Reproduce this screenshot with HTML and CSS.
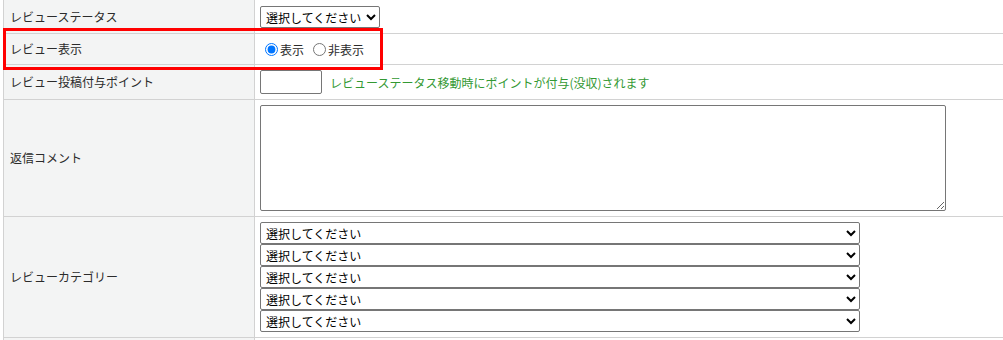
FILE: index.html
```html
<!DOCTYPE html>
<html lang="ja">
<head>
    <meta charset="UTF-8">
    <title>レビュー編集</title>
    <link rel="stylesheet" href="styles.css">
</head>
<body>
    <div class="review-form">
        <div class="row row-status">
            <div class="label">レビューステータス</div>
            <div class="field">
                <select class="status-select">
                    <option>選択してください</option>
                </select>
            </div>
        </div>
        <div class="row row-display">
            <div class="label">レビュー表示</div>
            <div class="field">
                <label class="radio"><input type="radio" name="disp" checked>表示</label>
                <label class="radio"><input type="radio" name="disp">非表示</label>
            </div>
        </div>
        <div class="row row-point">
            <div class="label">レビュー投稿付与ポイント</div>
            <div class="field">
                <input type="text" class="point-input">
                <span class="note">レビューステータス移動時にポイントが付与(没収)されます</span>
            </div>
        </div>
        <div class="row row-comment">
            <div class="label">返信コメント</div>
            <div class="field">
                <textarea class="comment"></textarea>
            </div>
        </div>
        <div class="row row-category">
            <div class="label">レビューカテゴリー</div>
            <div class="field field-stack">
                <select class="cat-select"><option>選択してください</option></select>
                <select class="cat-select"><option>選択してください</option></select>
                <select class="cat-select"><option>選択してください</option></select>
                <select class="cat-select"><option>選択してください</option></select>
                <select class="cat-select"><option>選択してください</option></select>
            </div>
        </div>
        <div class="row row-next">
            <div class="label"></div>
            <div class="field"></div>
        </div>

        <div class="highlight"></div>
    </div>
</body>
</html>
```

FILE: styles.css
```css
body {
    margin: 0;
    font-family: "Noto Sans CJK JP", "Noto Sans", sans-serif;
    font-size: 12px;
    color: #2b2b2b;
    background: #fff;
    overflow: hidden;
}
.review-form {
    position: relative;
    margin-left: 3px;
}
.row {
    display: grid;
    grid-template-columns: 252px 1fr;
}
.label {
    display: flex;
    align-items: center;
    padding-left: 6px;
    padding-bottom: 1px;
    background: #f3f4f4;
    border-left: 1px solid #d2d2d2;
    border-right: 1px solid #d2d2d2;
    border-bottom: 1px solid #d2d2d2;
    box-sizing: border-box;
}
.field {
    display: flex;
    align-items: center;
    padding-left: 5px;
    border-bottom: 1px solid #d2d2d2;
    box-sizing: border-box;
}
.row-status { height: 34px; }
.row-display { height: 31px; }
.row-point { height: 35px; }
.row-comment { height: 117px; }
.row-category { height: 121px; }
.row-next { height: 3px; }
.row > div { height: 100%; }

select {
    font-family: "Noto Sans CJK JP", "Noto Sans", sans-serif;
    font-size: 12px;
    color: #000;
    height: 22px;
    padding: 0 0 0 1px;
    margin: 0;
    border: 1px solid #767676;
    border-radius: 2px;
    background: #fff;
    box-sizing: border-box;
}
.status-select {
    width: 120px;
    margin-top: 1px;
}
.radio {
    display: flex;
    align-items: center;
    margin-right: 4px;
    font-size: 12px;
}
.radio input {
    margin: 1px 2px 0 5px;
    width: 13px;
    height: 13px;
}
.point-input {
    width: 62px;
    height: 24px;
    margin: 0 8px 0 0;
    border: 1px solid #767676;
    border-radius: 2px;
    box-sizing: border-box;
}
.note {
    color: #339933;
    font-size: 12px;
}
.comment {
    width: 686px;
    height: 106px;
    margin: 0;
    border: 1px solid #767676;
    border-radius: 2px;
    box-sizing: border-box;
    resize: both;
}
.field-stack {
    flex-direction: column;
    align-items: flex-start;
    justify-content: center;
}
.cat-select {
    display: block;
    width: 600px;
}
.highlight {
    position: absolute;
    left: 0;
    top: 28px;
    width: 380px;
    height: 42px;
    border: 3px solid #ff0000;
    box-sizing: border-box;
}
```
